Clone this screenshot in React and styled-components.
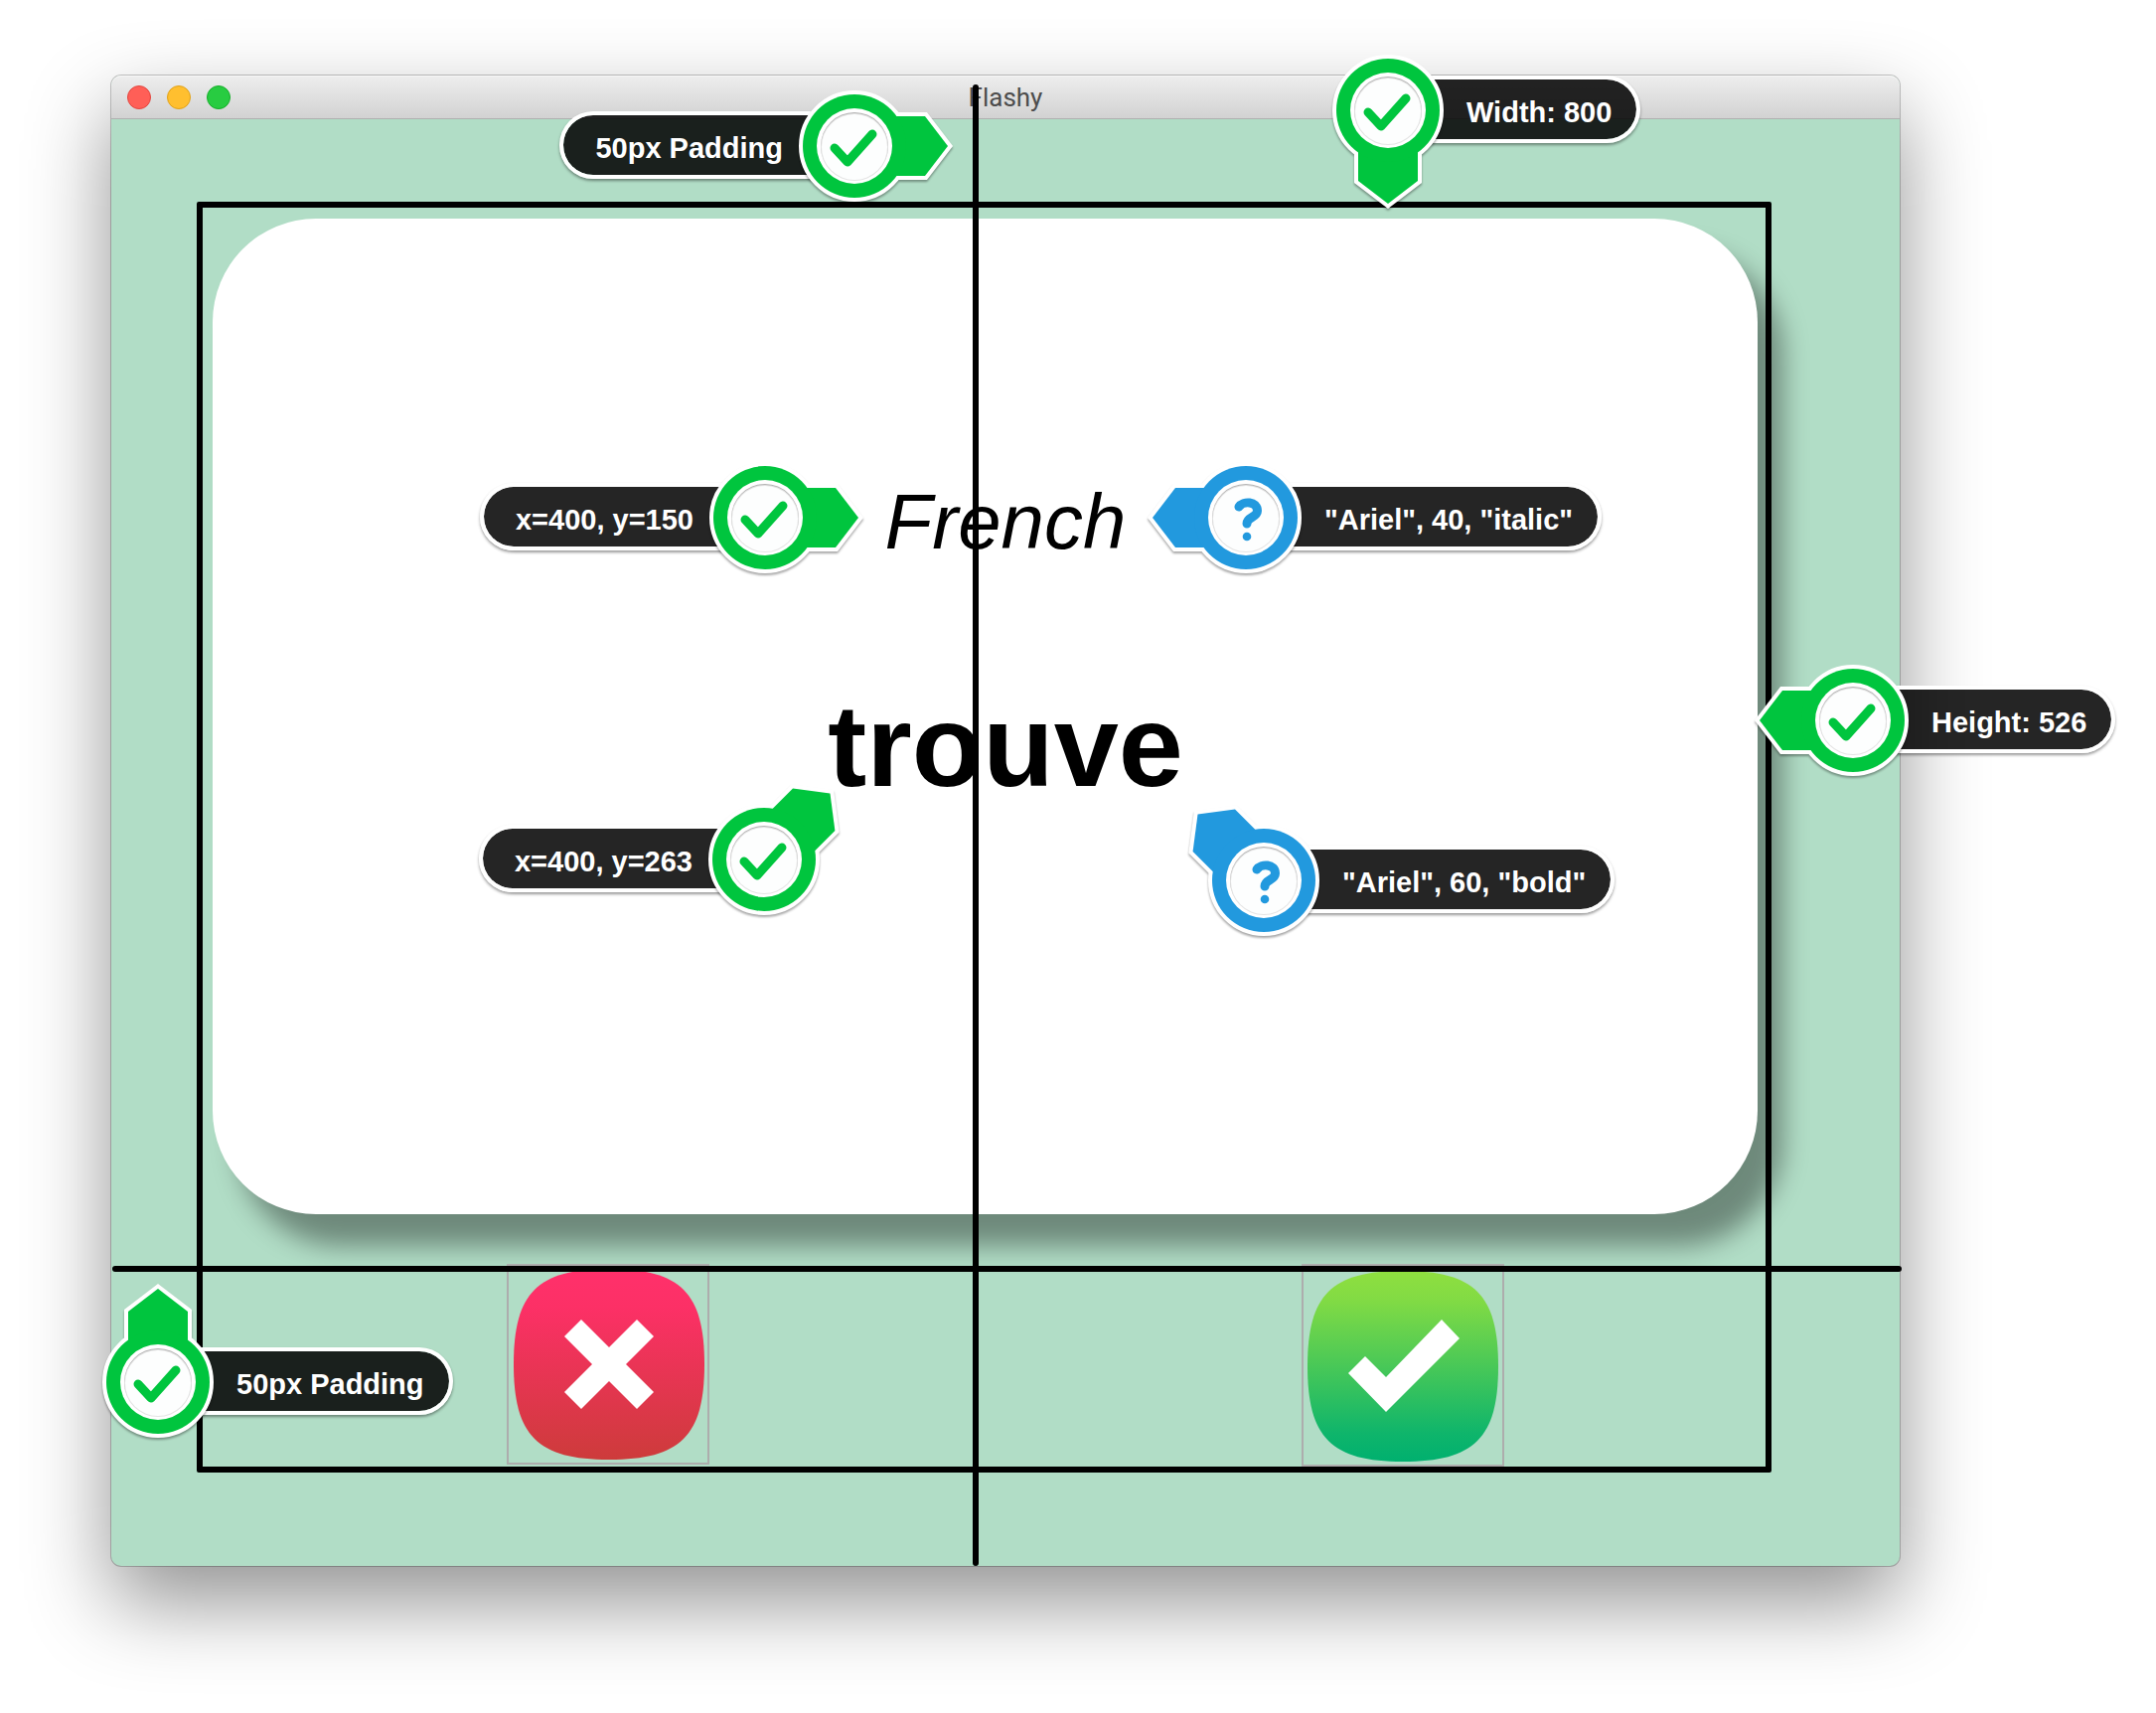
import React from "react";
import styled, { createGlobalStyle } from "styled-components";

const GlobalStyle = createGlobalStyle`
  * { box-sizing: border-box; }
  body {
    margin: 0;
    background: #ffffff;
    font-family: "Liberation Sans", Arial, sans-serif;
  }
`;

const Page = styled.main`
  padding: 76px 258px 148px 112px;
  overflow: hidden;
`;

const Window = styled.section`
  position: relative;
  border-radius: 10px;
  background: #b1ddc6;
  box-shadow:
    0 0 0 1px rgba(0, 0, 0, 0.22),
    0 36px 84px rgba(0, 0, 0, 0.43);
`;

const TitleBar = styled.header`
  display: grid;
  grid-template-columns: 1fr auto 1fr;
  align-items: center;
  height: 44px;
  padding: 0 16px;
  border-radius: 10px 10px 0 0;
  border-bottom: 1px solid #b0b0b0;
  background: linear-gradient(#eeeeee, #d2d2d2);
  box-shadow: inset 0 1px 0 #f6f6f6;
`;

const WindowControls = styled.div`
  display: flex;
  gap: 16px;
`;

const ControlDot = styled.button`
  width: 24px;
  height: 24px;
  padding: 0;
  border: 1px solid ${(p) => p.$edge};
  border-radius: 50%;
  background: ${(p) => p.$fill};
`;

const WindowTitle = styled.h1`
  margin: 0;
  font: 400 26px/44px Roboto, sans-serif;
  color: #4d4d4d;
`;

const Body = styled.div`
  padding: 100px;
`;

const Card = styled.article`
  display: flex;
  flex-direction: column;
  align-items: center;
  gap: 110px;
  margin: 0 43px 50px 2px;
  padding: 259px 0 401px 41px;
  border-radius: 104px;
  background: #ffffff;
  box-shadow: 25px 32px 26px rgba(0, 0, 0, 0.38);
`;

const Language = styled.p`
  margin: 0;
  font-size: 78px;
  line-height: 92px;
  font-style: italic;
  color: #000000;
`;

const Word = styled.h2`
  margin: 0;
  font-size: 117px;
  line-height: 140px;
  font-weight: 700;
  color: #000000;
`;

const Answers = styled.div`
  display: grid;
  grid-template-columns: 1fr 1fr;
  justify-items: center;
  align-items: start;
`;

const AnswerButton = styled.button`
  display: block;
  padding: 0;
  border: 2px solid #adadad;
  background: transparent;

  svg { display: block; }
`;

const Overlay = styled.div`
  position: absolute;
  inset: 0;
`;

const GuideFrame = styled.div`
  position: absolute;
  inset: 127px 129px 94px 86px;
  border: 6px solid #000000;
  border-radius: 2px;
`;

const VerticalGuide = styled.div`
  position: absolute;
  top: 9px;
  bottom: 0;
  left: calc(50% - 33px);
  width: 6px;
  border-radius: 3px;
  background: #000000;
`;

const HorizontalGuide = styled.div`
  position: absolute;
  left: 1px;
  right: -2px;
  bottom: 296px;
  height: 6px;
  border-radius: 3px;
  background: #000000;
`;

const CalloutBox = styled.div`
  position: absolute;
  top: ${(p) => p.$y - 34}px;
  ${(p) => (p.$side === "left" ? `right: calc(100% - (${p.$x}));` : `left: calc(${p.$x});`)}
`;

const CalloutLabel = styled.div`
  height: 68px;
  padding: ${(p) => (p.$side === "left" ? "4px 72px 0 32px" : "4px 25px 0 79px")};
  border: 4px solid #ffffff;
  border-width: ${(p) => (p.$side === "left" ? "4px 0 4px 4px" : "4px 4px 4px 0")};
  border-radius: ${(p) => (p.$side === "left" ? "34px 0 0 34px" : "0 34px 34px 0")};
  background: rgba(0, 0, 0, 0.855);
  background-clip: padding-box;
  box-shadow: 0 2px 3px rgba(0, 0, 0, 0.4);
  font-size: 29px;
  line-height: 58px;
  font-weight: 700;
  white-space: nowrap;
  color: #ffffff;
`;

const PinDrawing = styled.svg`
  position: absolute;
  top: -75px;
  ${(p) => (p.$side === "left" ? "right: -110px;" : "left: -110px;")}
  overflow: visible;
  filter: drop-shadow(0 2px 1px rgba(0, 0, 0, 0.35));
`;

const PIN_COLORS = { check: "#00c53e", question: "#2299de" };
const ARROW = "M0 -30 H71 L94 0 L71 30 H0 Z";

function Pin({ kind, angle, side }) {
  const color = PIN_COLORS[kind];
  return (
    <PinDrawing $side={side} width="220" height="220" viewBox="-110 -110 220 220" aria-hidden="true">
      <g fill="#ffffff" stroke="#ffffff" strokeWidth="8">
        <path d={ARROW} transform={`rotate(${angle})`} />
        <circle r="52" />
      </g>
      <g fill={color}>
        <path d={ARROW} transform={`rotate(${angle})`} />
        <circle r="52" />
      </g>
      <circle r="38" fill="#ffffff" />
      <circle r="34" fill="#b4b4b4" />
      <circle r="34" cy="1" fill="#e4e4e4" />
      <circle r="33" cy="1" fill="#fdfefe" />
      {kind === "check" ? (
        <path
          d="M-20 2 L-7 16 L18 -12"
          fill="none"
          stroke={color}
          strokeWidth="9"
          strokeLinecap="round"
          strokeLinejoin="round"
        />
      ) : (
        <>
          <path
            d="M-7 -11 C-3 -17 11.5 -17 11.5 -7 C11.5 0 1 -1 1 6"
            fill="none"
            stroke={color}
            strokeWidth="9"
            strokeLinecap="round"
          />
          <circle cx="1" cy="19" r="4.3" fill={color} />
        </>
      )}
    </PinDrawing>
  );
}

function Callout({ x, y, side, kind, angle, children }) {
  return (
    <CalloutBox $x={x} $y={y} $side={side}>
      <CalloutLabel $side={side}>{children}</CalloutLabel>
      <Pin kind={kind} angle={angle} side={side} />
    </CalloutBox>
  );
}

const SQUIRCLE =
  "M-96 0 C-96 -72 -72 -96 0 -96 C72 -96 96 -72 96 0 C96 72 72 96 0 96 C-72 96 -96 72 -96 0 Z";

function WrongIcon() {
  return (
    <svg width="200" height="198" viewBox="0 0 200 198" aria-hidden="true">
      <defs>
        <linearGradient id="wrong" x1="0" y1="0" x2="0" y2="1">
          <stop offset="0" stopColor="#ff306b" />
          <stop offset="0.2" stopColor="#fc3066" />
          <stop offset="1" stopColor="#cd3b3b" />
        </linearGradient>
      </defs>
      <g transform="translate(101 99)">
        <path d={SQUIRCLE} fill="url(#wrong)" />
        <path
          d="M-28 -45 L0 -17 L28 -45 L45 -28 L17 0 L45 28 L28 45 L0 17 L-28 45 L-45 28 L-17 0 L-45 -28 Z"
          fill="#ffffff"
        />
      </g>
    </svg>
  );
}

function RightIcon() {
  return (
    <svg width="200" height="200" viewBox="0 0 200 200" aria-hidden="true">
      <defs>
        <linearGradient id="right" x1="0" y1="0" x2="0" y2="1">
          <stop offset="0" stopColor="#8fdf3f" />
          <stop offset="0.15" stopColor="#82db44" />
          <stop offset="0.85" stopColor="#0fb56b" />
          <stop offset="1" stopColor="#00b06f" />
        </linearGradient>
      </defs>
      <path d={SQUIRCLE} transform="translate(100 101)" fill="url(#right)" />
      <path d="M139 54 L157 73 L83 147 L45 108 L62 91 L83 112 Z" fill="#ffffff" />
    </svg>
  );
}

const CALLOUTS = [
  { x: "50% - 152px", y: 70, side: "left", kind: "check", angle: 0, text: "50px Padding" },
  { x: "50% + 385px", y: 34, side: "right", kind: "check", angle: 90, text: "Width: 800" },
  { x: "50% - 242px", y: 444, side: "left", kind: "check", angle: 0, text: "x=400, y=150" },
  { x: "50% + 242px", y: 444, side: "right", kind: "question", angle: 180, text: '"Ariel", 40, "italic"' },
  { x: "50% - 243px", y: 788, side: "left", kind: "check", angle: -45, text: "x=400, y=263" },
  { x: "50% + 260px", y: 809, side: "right", kind: "question", angle: -135, text: '"Ariel", 60, "bold"' },
  { x: "100% - 47px", y: 648, side: "right", kind: "check", angle: 180, text: "Height: 526" },
  { x: "47px", y: 1314, side: "right", kind: "check", angle: -90, text: "50px Padding" },
];

export default function App() {
  return (
    <>
      <GlobalStyle />
      <Page>
        <Window>
          <TitleBar>
            <WindowControls>
              <ControlDot aria-label="Close" $fill="#ff5f57" $edge="#e2463f" />
              <ControlDot aria-label="Minimize" $fill="#ffbf2f" $edge="#e1a116" />
              <ControlDot aria-label="Zoom" $fill="#28cc41" $edge="#14ae28" />
            </WindowControls>
            <WindowTitle>Flashy</WindowTitle>
          </TitleBar>
          <Body>
            <Card>
              <Language>French</Language>
              <Word>trouve</Word>
            </Card>
            <Answers>
              <AnswerButton aria-label="Unknown word">
                <WrongIcon />
              </AnswerButton>
              <AnswerButton aria-label="Known word">
                <RightIcon />
              </AnswerButton>
            </Answers>
          </Body>
          <Overlay>
            <GuideFrame />
            <VerticalGuide />
            <HorizontalGuide />
            {CALLOUTS.map(({ text, ...place }) => (
              <Callout key={place.x} {...place}>
                {text}
              </Callout>
            ))}
          </Overlay>
        </Window>
      </Page>
    </>
  );
}
